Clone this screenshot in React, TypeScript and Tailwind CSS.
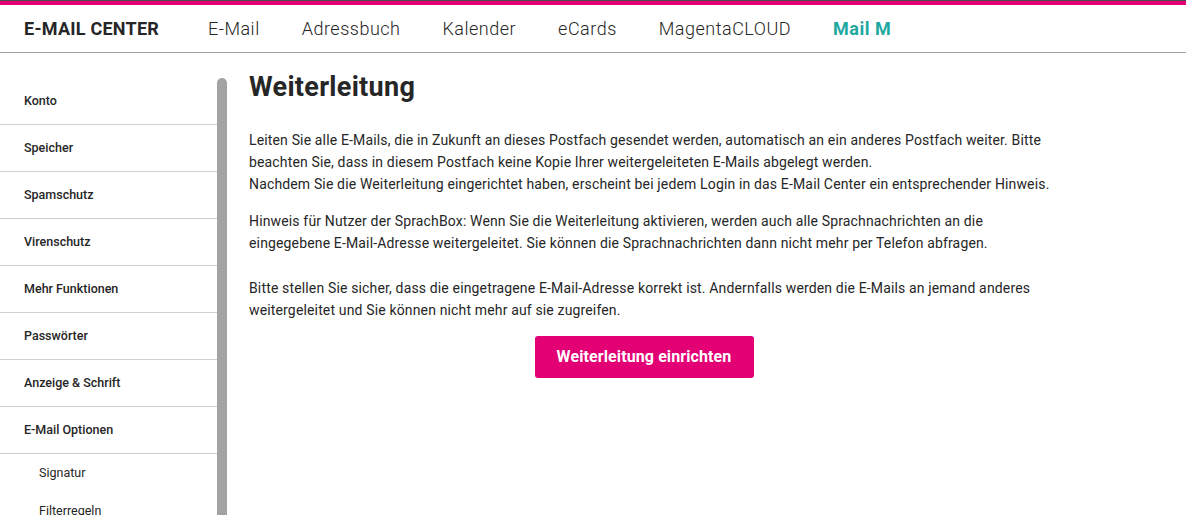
import React from "react";

const nav = [
  { label: "E-Mail", active: false },
  { label: "Adressbuch", active: false },
  { label: "Kalender", active: false },
  { label: "eCards", active: false },
  { label: "MagentaCLOUD", active: false },
  { label: "Mail M", active: true },
];

const side = [
  "Konto",
  "Speicher",
  "Spamschutz",
  "Virenschutz",
  "Mehr Funktionen",
  "Passwörter",
  "Anzeige & Schrift",
  "E-Mail Optionen",
];

export default function App() {
  return (
    <div
      className="w-[1186px] h-[515px] overflow-hidden bg-white text-[#262626] flex flex-col"
      style={{ fontFamily: "Roboto, 'Noto Sans', sans-serif" }}
    >
      <div className="h-px bg-[#4a4a4a]" />
      <div className="h-[4px] bg-[#e20074]" />
      <header className="h-[48px] flex items-center border-b border-[#a0a0a0] shrink-0">
        <div className="pl-[24px] w-[208px] text-[18px] font-bold tracking-[0.25px] text-[#262626]">
          E-MAIL CENTER
        </div>
        <nav className="flex items-center gap-[42px] text-[18px] font-light tracking-[0.5px]">
          {nav.map((n) => (
            <span
              key={n.label}
              className={
                n.active
                  ? "font-bold text-[#1fa8a0]"
                  : "text-[#262626]"
              }
            >
              {n.label}
            </span>
          ))}
        </nav>
      </header>
      <div className="flex flex-1 min-h-0">
        <aside className="w-[217px] shrink-0 pt-[25px]">
          {side.map((s) => (
            <div
              key={s}
              className="h-[47px] flex items-center pl-[24px] text-[12.5px] font-medium border-b border-[#d0d0d0]"
            >
              {s}
            </div>
          ))}
          <div className="h-[38px] flex items-center pl-[39px] text-[12.5px] pt-[1px]">Signatur</div>
          <div className="h-[38px] flex items-center pl-[39px] text-[12.5px]">Filterregeln</div>
        </aside>
        <div className="w-[10px] shrink-0 pt-[25px]">
          <div className="h-full bg-[#a3a3a3] rounded-t-[5px]" />
        </div>
        <main className="pl-[22px] pt-[17px] w-[900px]">
          <h1 className="text-[27px] font-bold leading-[34px] tracking-[0.3px]">Weiterleitung</h1>
          <div className="mt-[25px] text-[14px] leading-[22px] tracking-[0.15px] text-[#262626] whitespace-nowrap">
            <p>
              Leiten Sie alle E-Mails, die in Zukunft an dieses Postfach gesendet werden, automatisch an ein anderes Postfach weiter. Bitte
              <br />
              beachten Sie, dass in diesem Postfach keine Kopie Ihrer weitergeleiteten E-Mails abgelegt werden.
              <br />
              Nachdem Sie die Weiterleitung eingerichtet haben, erscheint bei jedem Login in das E-Mail Center ein entsprechender Hinweis.
            </p>
            <p className="mt-[15px]">
              Hinweis für Nutzer der SprachBox: Wenn Sie die Weiterleitung aktivieren, werden auch alle Sprachnachrichten an die
              <br />
              eingegebene E-Mail-Adresse weitergeleitet. Sie können die Sprachnachrichten dann nicht mehr per Telefon abfragen.
            </p>
            <p className="mt-[23px]">
              Bitte stellen Sie sicher, dass die eingetragene E-Mail-Adresse korrekt ist. Andernfalls werden die E-Mails an jemand anderes
              <br />
              weitergeleitet und Sie können nicht mehr auf sie zugreifen.
            </p>
          </div>
          <div className="w-[790px] flex justify-center mt-[15px]">
            <button className="h-[42px] w-[219px] rounded-[3px] bg-[#e20074] text-white text-[16px] font-bold tracking-[0.1px]">
              Weiterleitung einrichten
            </button>
          </div>
        </main>
      </div>
    </div>
  );
}
